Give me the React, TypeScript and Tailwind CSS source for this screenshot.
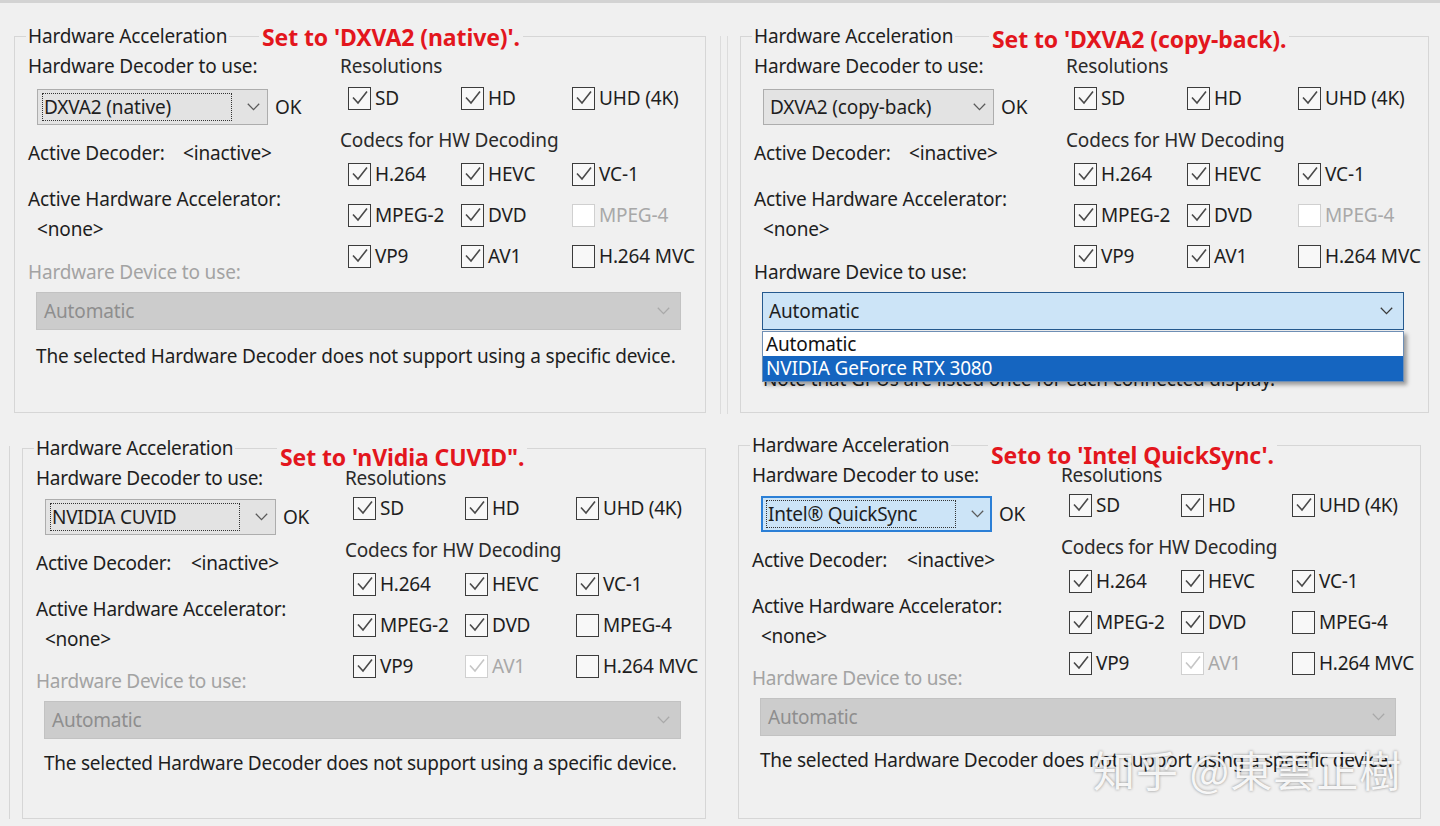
import type { ReactNode } from 'react';

type Cb = { label: string; checked: boolean; disabled?: boolean };

const topCodecs: Cb[] = [
  { label: 'H.264', checked: true },
  { label: 'HEVC', checked: true },
  { label: 'VC-1', checked: true },
  { label: 'MPEG-2', checked: true },
  { label: 'DVD', checked: true },
  { label: 'MPEG-4', checked: false, disabled: true },
  { label: 'VP9', checked: true },
  { label: 'AV1', checked: true },
  { label: 'H.264 MVC', checked: false },
];

const bottomCodecs: Cb[] = [
  { label: 'H.264', checked: true },
  { label: 'HEVC', checked: true },
  { label: 'VC-1', checked: true },
  { label: 'MPEG-2', checked: true },
  { label: 'DVD', checked: true },
  { label: 'MPEG-4', checked: false },
  { label: 'VP9', checked: true },
  { label: 'AV1', checked: true, disabled: true },
  { label: 'H.264 MVC', checked: false },
];

const resolutions: Cb[] = [
  { label: 'SD', checked: true },
  { label: 'HD', checked: true },
  { label: 'UHD (4K)', checked: true },
];

const Chevron = ({ color = '#5a5a5a' }: { color?: string }) => (
  <svg width="13" height="8" viewBox="0 0 13 8" className="shrink-0">
    <polyline points="0.8,0.8 6.5,6.6 12.2,0.8" fill="none" stroke={color} strokeWidth="1.3" />
  </svg>
);

const Check = ({ label, checked, disabled }: Cb) => (
  <div className="flex h-6 items-center gap-[4px]">
    <span
      className={
        disabled
          ? 'flex h-[23px] w-[23px] items-center justify-center border-[1.5px] border-[#d0d0d0] bg-white'
          : 'flex h-[23px] w-[23px] items-center justify-center border-[1.5px] border-[#3c3c3c] bg-[#f8f8f8]'
      }
    >
      {checked && (
        <svg width="20" height="20" viewBox="0 0 20 20">
          <path d="M3 9.5 L8 15 L17 3.5" fill="none" stroke={disabled ? '#c6c6c6' : '#4a4a4a'} strokeWidth="1.6" />
        </svg>
      )}
    </span>
    <span className={disabled ? 'whitespace-nowrap text-[#a8a8a8]' : 'whitespace-nowrap text-[#1e1e1e]'}>{label}</span>
  </div>
);

type Mode = 'focus' | 'plain' | 'blue';

const DecoderSelect = ({ value, mode }: { value: string; mode: Mode }) => (
  <div
    className={
      mode === 'blue'
        ? 'flex h-[36px] w-[231px] items-center border-2 border-[#2b7fd6] bg-[#cce4f7] pl-[3px] pr-[6px]'
        : 'flex h-[36px] w-[231px] items-center border border-[#adadad] bg-[#e3e3e3] pl-[4px] pr-[7px]'
    }
  >
    <span
      className={
        mode === 'plain'
          ? 'flex h-[28px] w-[190px] items-center border border-transparent pl-[1px]'
          : 'flex h-[28px] w-[190px] items-center border border-dotted border-[#333] pl-[1px]'
      }
    >
      {value}
    </span>
    <span className="ml-auto">
      <Chevron />
    </span>
  </div>
);

const DeviceSelect = ({ open }: { open: boolean }) =>
  open ? (
    <div className="relative">
      <div className="flex h-[38px] items-center border-[1.5px] border-[#25598e] bg-[#cce4f7] pl-[6px] pr-[10px]">
        <span>Automatic</span>
        <span className="ml-auto">
          <Chevron color="#3a3a3a" />
        </span>
      </div>
      {/* open dropdown list */}
      <div className="absolute left-0 right-0 top-full z-10 mt-[1px] border border-[#6f8fb5] bg-white shadow-[3px_3px_4px_rgba(0,0,0,0.35)]">
        <div className="h-[24px] pl-[3px] leading-[24px] text-[#111]">Automatic</div>
        <div className="h-[25px] bg-[#1565c0] pl-[3px] leading-[24px] text-white">NVIDIA GeForce RTX 3080</div>
      </div>
    </div>
  ) : (
    <div className="flex h-[38px] items-center border border-[#c2c2c2] bg-[#cccccc] pl-[7px] pr-[10px] text-[#8e8e8e]">
      <span>Automatic</span>
      <span className="ml-auto">
        <Chevron color="#a9a9a9" />
      </span>
    </div>
  );

type PanelProps = {
  note: string;
  noteClass: string;
  decoder: string;
  mode: Mode;
  open?: boolean;
  codecs: Cb[];
  tight?: boolean;
  className: string;
  children?: ReactNode;
};

const Panel = ({ note, noteClass, decoder, mode, open, codecs, tight, className, children }: PanelProps) => (
  <div className={`relative shrink-0 border border-[#d6d6d6] ${tight ? 'tracking-[-0.25px]' : ''} ${className}`}>
    <div className="-mt-px flex h-0 items-center pl-[11px]">
      <span className="bg-[#f0f0f0] px-[2px] leading-[24px] text-[#1e1e1e]">Hardware Acceleration</span>
    </div>
    <span
      className={`absolute whitespace-nowrap bg-[#f0f0f0] px-[3px] text-[23px] font-bold leading-[26px] tracking-[-0.1px] text-[#e3161d] ${noteClass}`}
    >
      {note}
    </span>

    <div className="flex items-start">
      <div className={tight ? 'w-[322px] shrink-0 pl-[13px]' : 'w-[325px] shrink-0 pl-[13px]'}>
        <div className="mt-[18px] leading-[24px]">Hardware Decoder to use:</div>
        <div className={tight ? 'ml-[9px] mt-[9px] flex items-center gap-[7px]' : 'ml-[9px] mt-[11px] flex items-center gap-[7px]'}>
          <DecoderSelect value={decoder} mode={mode} />
          <span>OK</span>
        </div>
        <div className="mt-[16px] flex leading-[24px]">
          <span className="w-[155px] shrink-0">Active Decoder:</span>
          <span>&lt;inactive&gt;</span>
        </div>
        <div className="mt-[22px] leading-[24px]">Active Hardware Accelerator:</div>
        <div className="ml-[9px] mt-[6px] leading-[24px]">&lt;none&gt;</div>
        <div
          className={
            open
              ? 'mt-[19px] leading-[24px] text-[#1e1e1e]'
              : tight
                ? 'mt-[18px] leading-[24px] text-[#a3a3a3]'
                : 'mt-[19px] leading-[24px] text-[#a3a3a3]'
          }
        >
          Hardware Device to use:
        </div>
      </div>

      <div className="flex-1">
        <div className="mt-[18px] leading-[24px] text-[#2a2a2a]">Resolutions</div>
        <div className={tight ? 'mt-[6px] grid grid-cols-[112px_111px_auto] pl-[8px]' : 'mt-[8px] grid grid-cols-[113px_111px_auto] pl-[8px]'}>
          {resolutions.map((r) => (
            <Check key={r.label} {...r} />
          ))}
        </div>
        <div className="mt-[18px] leading-[24px] text-[#2a2a2a]">Codecs for HW Decoding</div>
        <div className={tight ? 'mt-[10px] grid grid-cols-[112px_111px_auto] gap-y-[17px] pl-[8px]' : 'mt-[10px] grid grid-cols-[113px_111px_auto] gap-y-[17px] pl-[8px]'}>
          {codecs.map((c) => (
            <Check key={c.label} {...c} />
          ))}
        </div>
      </div>
    </div>

    <div className="ml-[21px] mr-[24px] mt-[8px]">
      <DeviceSelect open={!!open} />
    </div>
    <div className={open ? 'ml-[22px] mt-[37px] leading-[24px]' : tight ? 'ml-[21px] mt-[12px] leading-[24px]' : 'ml-[21px] mt-[14px] leading-[24px]'}>
      {open ? 'Note that GPUs are listed once for each connected display.' : 'The selected Hardware Decoder does not support using a specific device.'}
    </div>
    {children}
  </div>
);

export default function App() {
  return (
    <div className="h-[826px] w-[1440px] overflow-hidden border-t-[3px] border-[#d3d3d3] bg-[#f0f0f0] font-['Noto_Sans',sans-serif] text-[19px] tracking-[-0.15px] text-[#1e1e1e]">
      <div className="flex pt-[33px]">
        <Panel
          className="ml-[14px] h-[377px] w-[692px]"
          note="Set to 'DXVA2 (native)'."
          noteClass="left-[244px] -top-[13px]"
          decoder="DXVA2 (native)"
          mode="focus"
          codecs={topCodecs}
        />
        <div className="ml-[14px] h-[378px] w-[8px] shrink-0 border-x border-[#dcdcdc]" />
        <Panel
          className="ml-[12px] h-[377px] w-[689px]"
          note="Set to 'DXVA2 (copy-back)."
          noteClass="left-[248px] -top-[11px]"
          decoder="DXVA2 (copy-back)"
          mode="plain"
          open
          codecs={topCodecs}
        />
      </div>

      <div className="mt-[31px] flex items-end">
        <div className="ml-[9px] h-[373px] w-px shrink-0 bg-[#d6d6d6]" />
        <Panel
          className="ml-[12px] h-[371px] w-[684px]"
          note={'Set to \'nVidia CUVID".'}
          noteClass="left-[254px] -top-[5px]"
          decoder="NVIDIA CUVID"
          mode="focus"
          codecs={bottomCodecs}
          tight
        />
        <Panel
          className="ml-[32px] h-[374px] w-[683px]"
          note="Seto to 'Intel QuickSync'."
          noteClass="left-[249px] -top-[4px]"
          decoder="Intel® QuickSync"
          mode="blue"
          codecs={bottomCodecs}
          tight
        >
          {/* watermark over the screenshot */}
          <span className="pointer-events-none absolute left-[354px] top-[298px] whitespace-nowrap font-['Noto_Sans_CJK_SC',sans-serif] text-[42px] leading-[50px] tracking-[1px] text-white/90 [text-shadow:0_0_3px_rgba(0,0,0,0.45)]">
            知乎 @東雲正樹
          </span>
        </Panel>
      </div>
    </div>
  );
}
